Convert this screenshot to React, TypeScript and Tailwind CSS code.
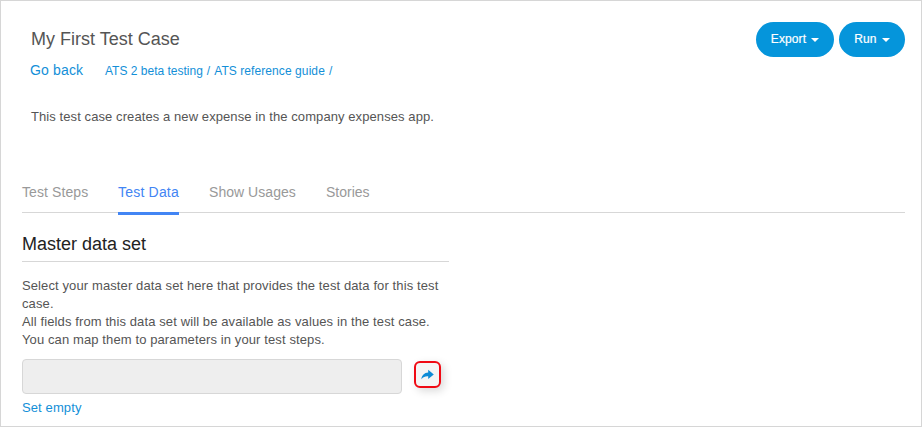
import React from "react";

function PillButton({ label, className }: { label: string; className: string }) {
  return (
    <button
      className={`flex h-[35px] items-center justify-center rounded-full bg-[#0595db] text-[12px] leading-[18px] font-normal text-white ${className}`}
    >
      <span className="-mt-px tracking-[0.1px] [-webkit-text-stroke:0.2px_white]">{label}</span>
      <span className="mt-px ml-[5px] border-x-4 border-t-4 border-x-transparent border-t-white" />
    </button>
  );
}

function Header() {
  return (
    <header className="flex h-[145px] justify-between pt-[21px] pr-[16px] pl-[29px]">
      <div className="whitespace-nowrap">
        <h1 className="ml-px mt-[6px] text-[18px] leading-[22px] text-[#555]">My First Test Case</h1>
        <div className="mt-[10px] flex h-[20px] items-baseline text-[#138fd8]">
          <a className="w-[75px] text-[14px] leading-[20px] tracking-[0.15px]">Go back</a>
          <nav className="flex gap-[4px] text-[12px] leading-[20px]">
            <a>ATS 2 beta testing</a>
            <span>/</span>
            <a className="tracking-[0.08px]">ATS reference guide</a>
            <span>/</span>
          </nav>
        </div>
        <p className="mt-[28px] ml-px text-[13px] leading-[18px] tracking-[0.085px] text-[#555]">
          This test case creates a new expense in the company expenses app.
        </p>
      </div>
      <div className="flex gap-[5px]">
        <PillButton label="Export" className="w-[78px]" />
        <PillButton label="Run" className="w-[66px]" />
      </div>
    </header>
  );
}

const tabs = [
  { label: "Test Steps", className: "w-[66px] tracking-[0.09px] text-[#999]" },
  {
    label: "Test Data",
    className: "h-[33px] w-[61px] border-b-[3px] border-[#4285f4] tracking-[0.2px] text-[#4285f4]",
  },
  { label: "Show Usages", className: "w-[87px] tracking-[0.04px] text-[#999]" },
  { label: "Stories", className: "text-[#999]" },
];

function Tabs() {
  return (
    <nav className="mr-[16px] ml-[21px] mt-[36px] flex h-[31px] gap-[30px] border-b border-[#d7d7d7] text-[14px] leading-[20px] whitespace-nowrap">
      {tabs.map((t) => (
        <a key={t.label} className={t.className}>
          {t.label}
        </a>
      ))}
    </nav>
  );
}

export default function App() {
  return (
    <div className="h-[427px] w-[922px] overflow-hidden border border-[#d6d6d6] bg-white font-['Liberation_Sans',Arial,sans-serif]">
      <Header />
      <Tabs />
      <section className="ml-[21px] w-[427px] text-[13px] leading-[18px] tracking-[0.11px] whitespace-nowrap text-[#555]">
        <h2 className="mt-[20px] h-[29px] border-b border-[#d7d7d7] text-[18px] leading-[22px] tracking-normal text-[#222]">
          Master data set
        </h2>
        <p className="mt-[15px]">
          Select your master data set here that provides the test data for this test
          <br />
          case.
          <br />
          All fields from this data set will be available as values in the test case.
          <br />
          You can map them to parameters in your test steps.
        </p>
        <div className="mt-[10px] flex h-[35px] gap-[12px]">
          <div className="w-[380px] rounded-[4px] border border-[#d7d7d7] bg-[#eee]" />
          <button className="mt-[2px] flex h-[27px] w-[27px] items-center justify-center rounded-[6px] border-2 border-[#f00a14] bg-[#f5f5f5] shadow-[3px_3px_8px_rgba(0,0,0,0.15)]">
            <svg width="13" height="11" viewBox="0 0 13 11" fill="#0d8bd6">
              <path d="M7.2 0.8 L12.8 5.4 L7.2 10 V7.3 C4.4 7.1 2.3 7.8 0.4 10.3 C0.7 6.3 3.4 3.8 7.2 3.5 Z" />
            </svg>
          </button>
        </div>
        <a className="mt-[5px] block text-[#138fd8]">Set empty</a>
      </section>
    </div>
  );
}
